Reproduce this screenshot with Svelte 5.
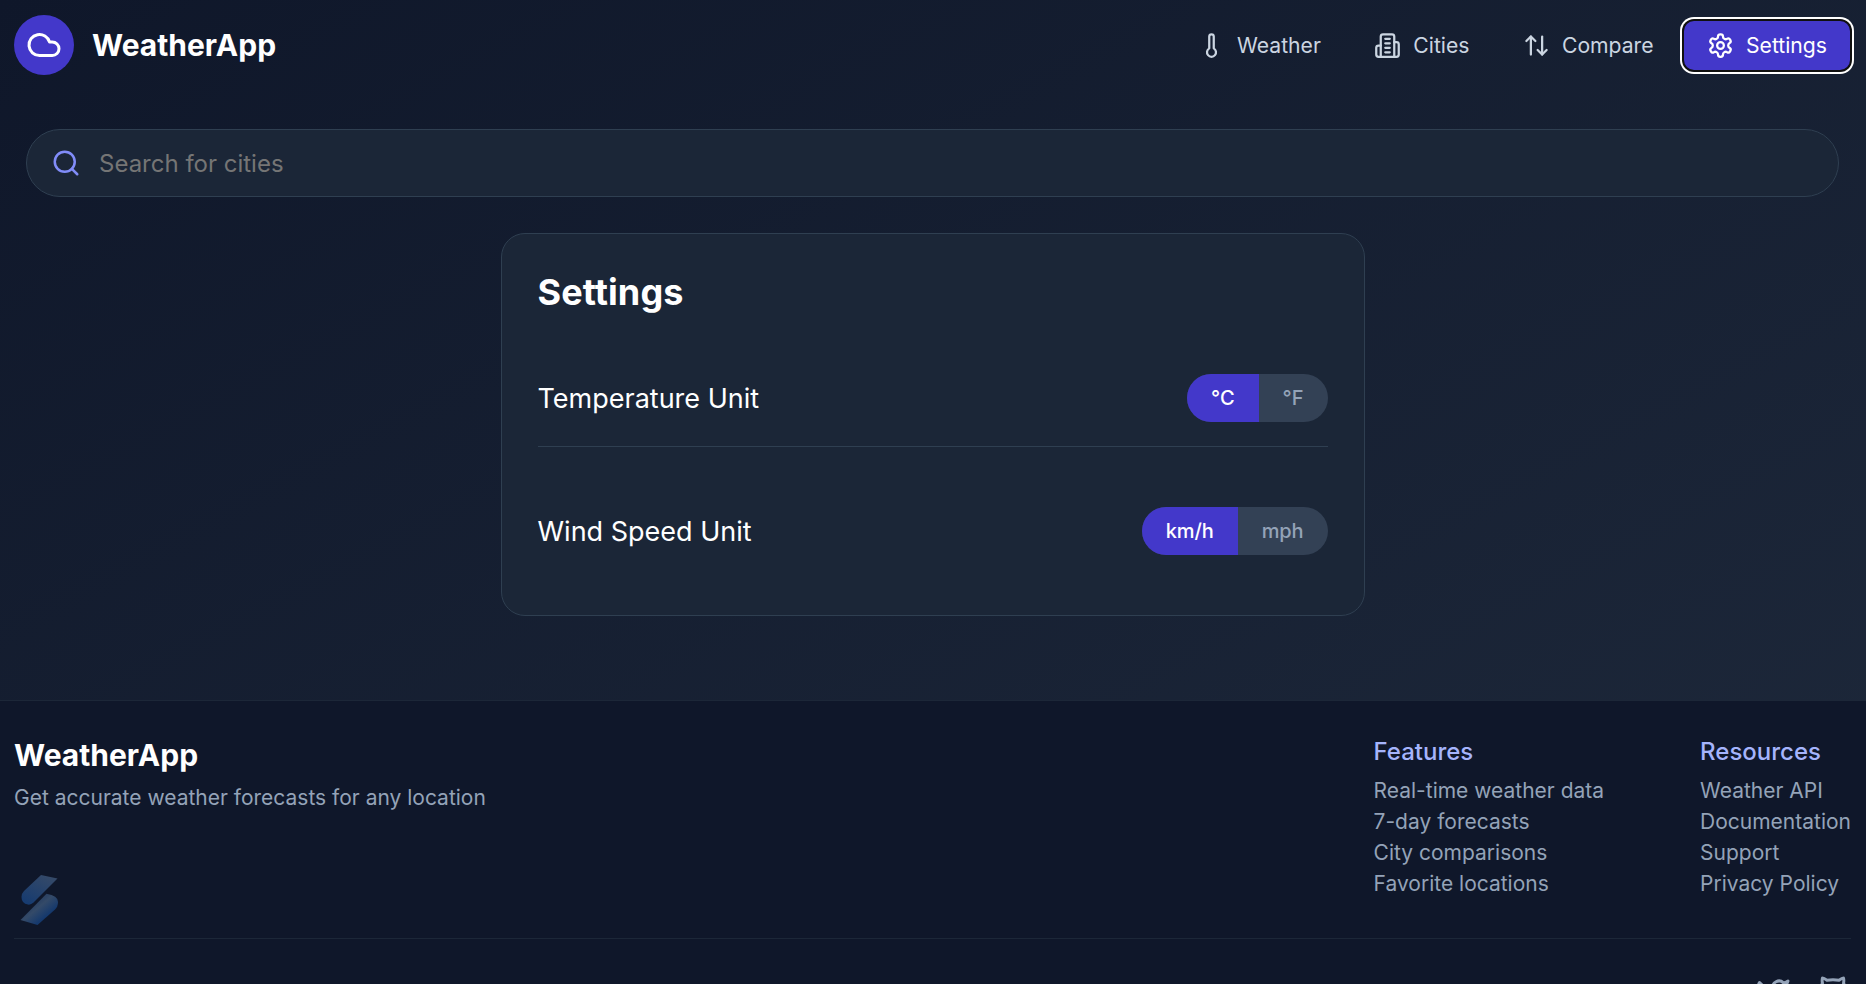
<script>
  const nav = [
    { label: 'Weather', icon: ['M14 4v10.54a4 4 0 1 1-4 0V4a2 2 0 0 1 4 0Z'] },
    {
      label: 'Cities',
      icon: [
        'M6 22V4a2 2 0 0 1 2-2h8a2 2 0 0 1 2 2v18Z',
        'M6 12H4a2 2 0 0 0-2 2v6a2 2 0 0 0 2 2h2',
        'M18 9h2a2 2 0 0 1 2 2v9a2 2 0 0 1-2 2h-2',
        'M10 6h4', 'M10 10h4', 'M10 14h4', 'M10 18h4'
      ]
    },
    { label: 'Compare', icon: ['m21 16-4 4-4-4', 'M17 20V4', 'm3 8 4-4 4 4', 'M7 4v16'] },
    {
      label: 'Settings',
      icon: [
        'M12.22 2h-.44a2 2 0 0 0-2 2v.18a2 2 0 0 1-1 1.73l-.43.25a2 2 0 0 1-2 0l-.15-.08a2 2 0 0 0-2.73.73l-.22.38a2 2 0 0 0 .73 2.73l.15.1a2 2 0 0 1 1 1.72v.51a2 2 0 0 1-1 1.74l-.15.09a2 2 0 0 0-.73 2.73l.22.38a2 2 0 0 0 2.73.73l.15-.08a2 2 0 0 1 2 0l.43.25a2 2 0 0 1 1 1.73V20a2 2 0 0 0 2 2h.44a2 2 0 0 0 2-2v-.18a2 2 0 0 1 1-1.73l.43-.25a2 2 0 0 1 2 0l.15.08a2 2 0 0 0 2.73-.73l.22-.39a2 2 0 0 0-.73-2.73l-.15-.08a2 2 0 0 1-1-1.74v-.5a2 2 0 0 1 1-1.74l.15-.09a2 2 0 0 0 .73-2.73l-.22-.38a2 2 0 0 0-2.73-.73l-.15.08a2 2 0 0 1-2 0l-.43-.25a2 2 0 0 1-1-1.73V4a2 2 0 0 0-2-2z',
        'M12 9a3 3 0 1 0 0 6a3 3 0 1 0 0-6'
      ]
    }
  ];
  let active = $state('Settings');

  const settings = $state([
    { label: 'Temperature Unit', options: ['°C', '°F'], value: '°C' },
    { label: 'Wind Speed Unit', options: ['km/h', 'mph'], value: 'km/h' }
  ]);

  const columns = [
    { title: 'Features', links: ['Real-time weather data', '7-day forecasts', 'City comparisons', 'Favorite locations'] },
    { title: 'Resources', links: ['Weather API', 'Documentation', 'Support', 'Privacy Policy'] }
  ];

  const social = [
    'M22 4s-.7 2.1-2 3.4c1.6 10-9.4 17.3-18 11.6 2.2.1 4.4-.6 6-2C3 15.5.5 9.6 3 5c2.2 2.6 5.6 4.1 9 4-.9-4.2 4-6.6 7-3.8 1.1 0 3-1.2 3-1.2z',
    'M15 22v-4a4.8 4.8 0 0 0-1-3.5c3 0 6-2 6-5.5.08-1.25-.27-2.48-1-3.5.28-1.15.28-2.35 0-3.5 0 0-1 0-3 1.5-2.64-.5-5.36-.5-8 0C6 2 5 2 5 2c-.3 1.15-.3 2.35 0 3.5A5.403 5.403 0 0 0 4 9c0 3.5 3 5.5 6 5.5-.39.49-.68 1.05-.85 1.65-.17.6-.22 1.23-.15 1.85v4'
  ];
</script>

{#snippet icon(paths, size)}
  <svg width={size} height={size} viewBox="0 0 24 24" fill="none" stroke="currentColor" stroke-width="2" stroke-linecap="round" stroke-linejoin="round">
    {#each paths as d}<path {d} />{/each}
  </svg>
{/snippet}

<div class="app">
  <header>
    <div class="brand">
      <span class="logo">{@render icon(['M17.5 19H9a7 7 0 1 1 6.71-9h1.79a4.5 4.5 0 1 1 0 9Z'], 36)}</span>
      <span class="name">WeatherApp</span>
    </div>
    <nav>
      {#each nav as item}
        <button class="tab" class:active={active === item.label} onclick={() => (active = item.label)}>
          {@render icon(item.icon, 27)}
          <span>{item.label}</span>
        </button>
      {/each}
    </nav>
  </header>

  <main>
    <label class="search">
      {@render icon(['M11 3a8 8 0 1 0 0 16a8 8 0 1 0 0-16', 'm21 21-4.3-4.3'], 30)}
      <input type="text" placeholder="Search for cities" />
    </label>

    <section class="card">
      <h1>Settings</h1>
      {#each settings as row}
        <div class="row">
          <span>{row.label}</span>
          <div class="toggle">
            {#each row.options as option}
              <button class:on={row.value === option} onclick={() => (row.value = option)}>{option}</button>
            {/each}
          </div>
        </div>
      {/each}
    </section>
  </main>

  <footer>
    <div class="top">
      <div class="about">
        <h2>WeatherApp</h2>
        <p>Get accurate weather forecasts for any location</p>
      </div>
      <div class="columns">
        {#each columns as column}
          <div>
            <h3>{column.title}</h3>
            <ul>
              {#each column.links as link}<li>{link}</li>{/each}
            </ul>
          </div>
        {/each}
      </div>
    </div>
    <div class="bottom">
      {#each social as d}{@render icon([d], 36)}{/each}
    </div>
  </footer>

  <div class="badge">
    <svg width="76" height="78" viewBox="0 0 76 78">
      <defs>
        <linearGradient id="upper" x1="0.8" y1="0" x2="0.2" y2="1">
          <stop offset="0" stop-color="#364a68" />
          <stop offset="1" stop-color="#163b70" />
        </linearGradient>
        <linearGradient id="lower" x1="0.3" y1="0.3" x2="0.7" y2="0.7">
          <stop offset="0" stop-color="#253c60" />
          <stop offset="0.4" stop-color="#344a68" />
          <stop offset="1" stop-color="#15396d" />
        </linearGradient>
      </defs>
      <path fill="url(#upper)" d="M41 13L57.500 16.500L33.500 40.500Q31 43 28 42.600Q21.500 41.500 21.500 35Q21.500 31.500 24 29Z" />
      <path fill="url(#lower)" d="M46.500 31.800Q58 33.500 58 40Q58 44.500 55 47.500L37.500 63L20.500 58Z" />
    </svg>
  </div>
</div>

<style>
  :global(body) {
    margin: 0;
    overflow: hidden;
    background: #0f172a;
  }
  .app {
    position: relative;
    height: 984px;
    overflow: hidden;
    display: flex;
    flex-direction: column;
    box-sizing: border-box;
    background: linear-gradient(to bottom right, #0f172a, #1e293b);
    color: #fff;
    font-family: Inter, sans-serif;
    line-height: 1.5;
  }
  svg {
    display: block;
    flex: none;
  }
  button {
    border: 0;
    margin: 0;
    font: inherit;
    cursor: pointer;
  }
  header {
    flex: none;
    display: flex;
    justify-content: space-between;
    align-items: center;
    height: 90px;
    padding: 0 16px 0 14px;
    box-sizing: border-box;
  }
  .brand {
    display: flex;
    align-items: center;
    gap: 18px;
  }
  .logo {
    display: grid;
    place-items: center;
    width: 60px;
    height: 60px;
    border-radius: 50%;
    background: #4338ca;
  }
  .name,
  h2 {
    font-size: 30px;
    font-weight: 700;
  }
  nav {
    display: flex;
    gap: 7.5px;
  }
  .tab {
    display: flex;
    align-items: center;
    gap: 12px;
    height: 49px;
    padding: 0 23px;
    border-radius: 10px;
    background: none;
    color: #cbd5e1;
    font-size: 21.15px;
  }
  .tab span,
  .row > span {
    padding-top: 2px;
  }
  .tab.active {
    background: #4338ca;
    color: #fff;
    box-shadow: 0 0 0 2px #101010, 0 0 0 4px #fff;
  }
  main {
    flex: none;
    height: 610px;
    box-sizing: border-box;
    padding: 39px 27px 0 26px;
  }
  .search {
    display: flex;
    align-items: center;
    gap: 18px;
    height: 68px;
    padding: 0 24px;
    box-sizing: border-box;
    border: 1px solid #2f3f51;
    border-radius: 34px;
    background: #1b2637;
    color: #818cf8;
  }
  input {
    flex: 1;
    border: 0;
    outline: 0;
    padding: 0;
    background: none;
    color: #fff;
    font: 24px Inter, sans-serif;
  }
  input::placeholder {
    color: #757575;
  }
  .card {
    width: 864px;
    height: 383px;
    margin: 36px auto 0;
    padding: 31px 36px 0;
    box-sizing: border-box;
    border: 1px solid #2f3f51;
    border-radius: 24px;
    background: #1b2637;
  }
  h1 {
    margin: 0 0 31px;
    font-size: 36px;
    font-weight: 700;
    letter-spacing: 0.1px;
  }
  .row {
    display: flex;
    justify-content: space-between;
    align-items: center;
    padding: 24px 0;
    height: 48px;
    margin-bottom: 36px;
    font-size: 27px;
  }
  .row:not(:last-child) {
    border-bottom: 1px solid #2f3f51;
  }
  .toggle {
    display: flex;
    overflow: hidden;
    border-radius: 24px;
    background: #334155;
  }
  .toggle button {
    height: 48px;
    padding: 0 24px;
    background: none;
    color: #94a3b8;
    font-size: 20px;
    font-weight: 500;
  }
  .toggle .on {
    background: #4338ca;
    color: #fff;
  }
  .row:last-child .toggle button {
    letter-spacing: -0.1px;
  }
  footer {
    flex: 1;
    padding: 36px 15px 0 14px;
    border-top: 1px solid #1c2738;
    background: #0f172a;
  }
  .top {
    display: flex;
    justify-content: space-between;
    height: 201px;
    border-bottom: 1px solid #1c2738;
  }
  h2,
  h3,
  p,
  ul {
    margin: 0;
    padding: 0;
    list-style: none;
  }
  h2 {
    line-height: 37px;
  }
  .about p {
    margin-top: 8px;
  }
  .about p,
  li {
    color: #94a3b8;
    font-size: 21px;
    line-height: 31px;
  }
  .columns {
    display: flex;
    gap: 96px;
  }
  h3 {
    margin-bottom: 8px;
    color: #a5b4fc;
    font-size: 24px;
    line-height: 30px;
    font-weight: 500;
  }
  .bottom {
    display: flex;
    justify-content: flex-end;
    gap: 24px;
    padding: 36px 0 0;
    color: #94a3b8;
  }
  .badge {
    position: absolute;
    left: 0;
    top: 862px;
  }
</style>
